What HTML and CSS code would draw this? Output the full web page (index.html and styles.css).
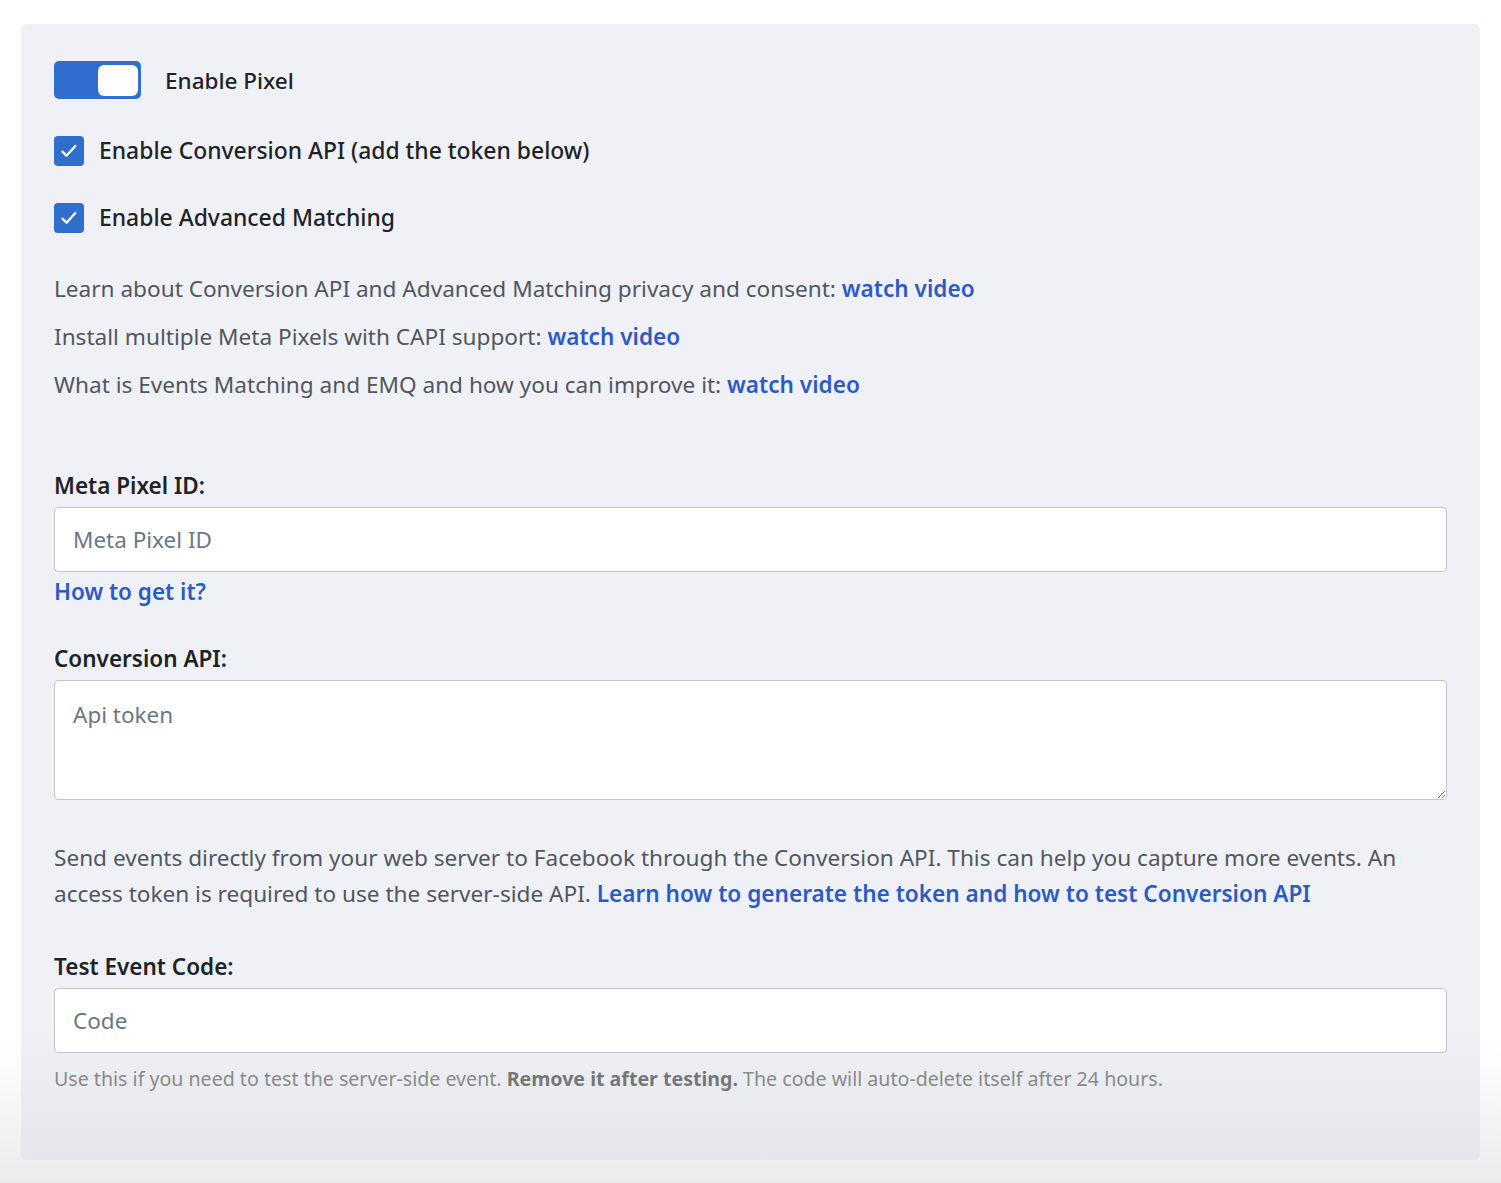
FILE: index.html
```html
<!DOCTYPE html>
<html>
  <head>
    <meta charset="utf-8">
    <meta name="viewport" content="width=device-width, initial-scale=1">
    <title>Pixel Settings</title>
    <link rel="stylesheet" href="styles.css">
  </head>
  <body>
    <div class="card">
      <label class="switch-row">
        <span class="switch"><span class="knob"></span></span>
        <span class="switch-label">Enable Pixel</span>
      </label>

      <label class="check-row">
        <span class="check">
          <svg viewBox="0 0 20 20" width="24" height="24"><path d="M4.5 10.5l3.4 3.4 7.4-8" fill="none" stroke="#fff" stroke-width="1.9" stroke-linecap="round" stroke-linejoin="round"/></svg>
        </span>
        <span>Enable Conversion API (add the token below)</span>
      </label>

      <label class="check-row">
        <span class="check">
          <svg viewBox="0 0 20 20" width="24" height="24"><path d="M4.5 10.5l3.4 3.4 7.4-8" fill="none" stroke="#fff" stroke-width="1.9" stroke-linecap="round" stroke-linejoin="round"/></svg>
        </span>
        <span>Enable Advanced Matching</span>
      </label>

      <div class="info">
        <p>Learn about Conversion API and Advanced Matching privacy and consent: <a href="#">watch video</a></p>
        <p>Install multiple Meta Pixels with CAPI support: <a href="#">watch video</a></p>
        <p>What is Events Matching and EMQ and how you can improve it: <a href="#">watch video</a></p>
      </div>

      <div class="field first">
        <label class="field-label">Meta Pixel ID:</label>
        <input class="text-input" type="text" placeholder="Meta Pixel ID">
        <a class="help-link" href="#">How to get it?</a>
      </div>

      <div class="field">
        <label class="field-label">Conversion API:</label>
        <textarea class="text-area" placeholder="Api token"></textarea>
      </div>

      <p class="desc">Send events directly from your web server to Facebook through the Conversion API. This can help you capture more events. An access token is required to use the server-side API. <a href="#">Learn how to generate the token and how to test Conversion API</a></p>

      <div class="field">
        <label class="field-label">Test Event Code:</label>
        <input class="text-input" type="text" placeholder="Code">
        <p class="hint">Use this if you need to test the server-side event. <strong>Remove it after testing.</strong> The code will auto-delete itself after 24 hours.</p>
      </div>
    </div>
  </body>
</html>
```

FILE: styles.css
```css
html { height: 100%; }
body {
  margin: 0;
  padding: 24px 21px 23px 21px;
  font-family: "Noto Sans", "Open Sans", sans-serif;
  color: #1d2327;
  background: linear-gradient(to bottom, #fff 0, #fff 1040px, #ebebeb 100%);
  min-height: 100%;
  box-sizing: border-box;
}
.card {
  background: linear-gradient(to bottom, #f0f1f6 0, #f0f1f6 1000px, #e5e6eb 100%);
  border-radius: 6px;
  padding: 37px 33px 44px 33px;
  height: 1136px;
  box-sizing: border-box;
}
a { color: #2b5bc7; font-weight: 600; text-decoration: none; }

.switch-row { display: flex; align-items: center; gap: 24px; }
.switch {
  width: 87px; height: 38px;
  background: #2f6ecd;
  border-radius: 5px;
  display: flex; justify-content: flex-end; align-items: center;
  padding: 0 3px;
  box-sizing: border-box;
}
.knob { width: 40px; height: 31px; background: #fff; border-radius: 6px; }
.switch-label { font-size: 22.5px; font-weight: 500; }

.check-row {
  display: flex; align-items: center; gap: 15px;
  font-size: 22.9px; font-weight: 500;
  margin-top: 36px;
}
.check-row + .check-row { margin-top: 36px; }
.check {
  width: 30px; height: 30px;
  background: #2f6ecd;
  border-radius: 4px;
  display: flex; align-items: center; justify-content: center;
}

.info { margin-top: 41px; }
.info p { margin: 0 0 18px 0; font-size: 22.6px; line-height: 30px; color: #50575e; }

.field { display: flex; flex-direction: column; }
.field.first { margin-top: 71px; }
.field-label { font-size: 22.5px; font-weight: 600; line-height: 30px; margin-bottom: 6px; }
.text-input, .text-area {
  width: 100%;
  box-sizing: border-box;
  border: 1px solid #c3c4c7;
  border-radius: 4px;
  background: #fff;
  font-family: inherit;
  font-size: 22.5px;
  padding: 0 18px;
  color: #1d2327;
}
.text-input { height: 65px; }
.text-area { height: 120px; padding-top: 18px; resize: vertical; }
.text-input::placeholder, .text-area::placeholder { color: #6c7781; }
.help-link { font-size: 22.5px; line-height: 40px; }
.field + .field { margin-top: 32px; }

.desc { margin: 40px 0 40px 0; font-size: 22.6px; line-height: 36px; color: #50575e; }
.hint { margin: 12px 0 0 0; font-size: 19.6px; color: #8a8a8a; }
.hint strong { color: #777; font-weight: 700; }
```
